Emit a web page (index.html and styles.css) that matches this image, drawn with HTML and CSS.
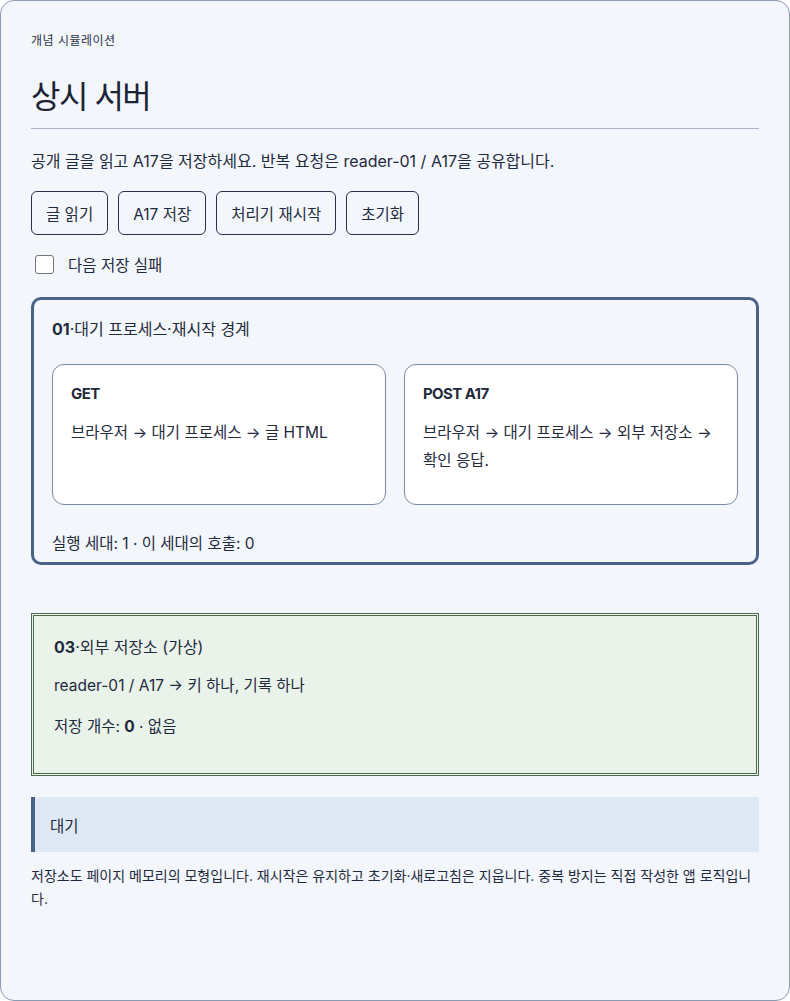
FILE: index.html
```html
<!DOCTYPE html>
<html lang="ko">
<head>
    <meta charset="UTF-8">
    <meta name="viewport" content="width=device-width, initial-scale=1.0">
    <title>상시 서버</title>
    <link rel="stylesheet" href="styles.css">
</head>
<body>
    <!-- Cartão principal da simulação -->
    <div class="sim">
        <p class="eyebrow">개념 시뮬레이션</p>
        <h1>상시 서버</h1>
        <p class="lead">공개 글을 읽고 A17을 저장하세요. 반복 요청은 reader-01 / A17을 공유합니다.</p>

        <div class="actions">
            <button type="button">글 읽기</button>
            <button type="button">A17 저장</button>
            <button type="button">처리기 재시작</button>
            <button type="button">초기화</button>
        </div>

        <label class="check">
            <input type="checkbox">
            <span>다음 저장 실패</span>
        </label>

        <!-- Processo em espera -->
        <section class="panel process">
            <h3><b>01</b>·대기 프로세스·재시작 경계</h3>
            <div class="routes">
                <div class="route">
                    <h4>GET</h4>
                    <p>브라우저 → 대기 프로세스 → 글 HTML</p>
                </div>
                <div class="route">
                    <h4>POST A17</h4>
                    <p>브라우저 → 대기 프로세스 → 외부 저장소 → 확인 응답.</p>
                </div>
            </div>
            <p class="meta">실행 세대: 1 · 이 세대의 호출: 0</p>
        </section>

        <!-- Armazenamento externo -->
        <section class="panel store">
            <h3><b>03</b>·외부 저장소 (가상)</h3>
            <p>reader-01 / A17 → 키 하나, 기록 하나</p>
            <p>저장 개수: <b>0</b> · 없음</p>
        </section>

        <div class="status">대기</div>

        <p class="note">저장소도 페이지 메모리의 모형입니다. 재시작은 유지하고 초기화·새로고침은 지웁니다. 중복 방지는 직접 작성한 앱 로직입니다.</p>
    </div>
</body>
</html>
```

FILE: styles.css
```css
/* Base da página */
* {
    box-sizing: border-box;
}

body {
    margin: 0;
    padding: 0;
    background-color: #ffffff;
    font-family: Inter, "Noto Sans CJK KR", sans-serif;
    color: #1f2a3d;
}

.sim {
    width: 790px;
    height: 1001px;
    padding: 32px 30px;
    background-color: #f3f6fb;
    border: 1px solid #8d9bb0;
    border-radius: 14px;
}

.eyebrow {
    margin: 0;
    font-size: 12px;
    line-height: 16px;
    letter-spacing: 0.5px;
    color: #2b3447;
}

h1 {
    margin: 26px 0 0 0;
    padding-bottom: 9px;
    font-size: 32px;
    font-weight: 400;
    letter-spacing: -1.5px;
    line-height: 44px;
    border-bottom: 1px solid #a8b6c8;
    color: #1b2435;
}

.lead {
    margin: 22px 0 0 0;
    font-size: 16px;
    line-height: 20px;
}

/* Botões */
.actions {
    display: flex;
    gap: 10px;
    margin-top: 20px;
}

.actions button {
    height: 44px;
    padding: 0 14px;
    font-family: inherit;
    font-size: 15.5px;
    color: #1f2a3d;
    background: transparent;
    border: 1px solid #27324a;
    border-radius: 6px;
}

.check {
    display: flex;
    align-items: center;
    gap: 14px;
    height: 20px;
    margin: 19px 0 0 4px;
    font-size: 15.5px;
}

.check input {
    width: 19px;
    height: 19px;
    margin: 0;
    appearance: none;
    -webkit-appearance: none;
    background: #fff;
    border: 1px solid #767676;
    border-radius: 3px;
}

/* Painéis */
.panel h3 {
    margin: 0;
    font-size: 16px;
    line-height: 20px;
    font-weight: 400;
}

.panel h3 b {
    font-weight: 700;
}

.process {
    margin-top: 23px;
    padding: 19px 18px 8px 18px;
    border: 3px solid #4b6288;
    border-radius: 10px;
}

.routes {
    display: grid;
    grid-template-columns: 1fr 1fr;
    gap: 18px;
    margin-top: 25px;
}

.route {
    height: 141px;
    padding: 19px 18px;
    background-color: #ffffff;
    border: 1px solid #7b8aa5;
    border-radius: 12px;
}

.route h4 {
    margin: 0;
    font-size: 15px;
    line-height: 20px;
    font-weight: 700;
    letter-spacing: -0.6px;
}

.route p {
    margin: 15px 0 0 0;
    font-size: 15.5px;
    line-height: 28px;
}

.meta {
    margin: 29px 0 0 0;
    font-size: 15.5px;
    line-height: 20px;
}

.store {
    margin-top: 48px;
    height: 163px;
    padding: 21px 20px;
    background-color: #eaf3ea;
    border: 3px double #4e6b4e;
}

.store p {
    margin: 19px 0 0 0;
    font-size: 15.5px;
    line-height: 20px;
}

.store p + p {
    margin-top: 21px;
}

/* Estado */
.status {
    margin-top: 21px;
    height: 55px;
    padding: 0 15px;
    display: flex;
    align-items: center;
    background-color: #dfe9f5;
    border-left: 4px solid #4b6288;
    font-size: 15.5px;
}

.note {
    margin: 12px 0 0 0;
    font-size: 14px;
    line-height: 23px;
}
```
